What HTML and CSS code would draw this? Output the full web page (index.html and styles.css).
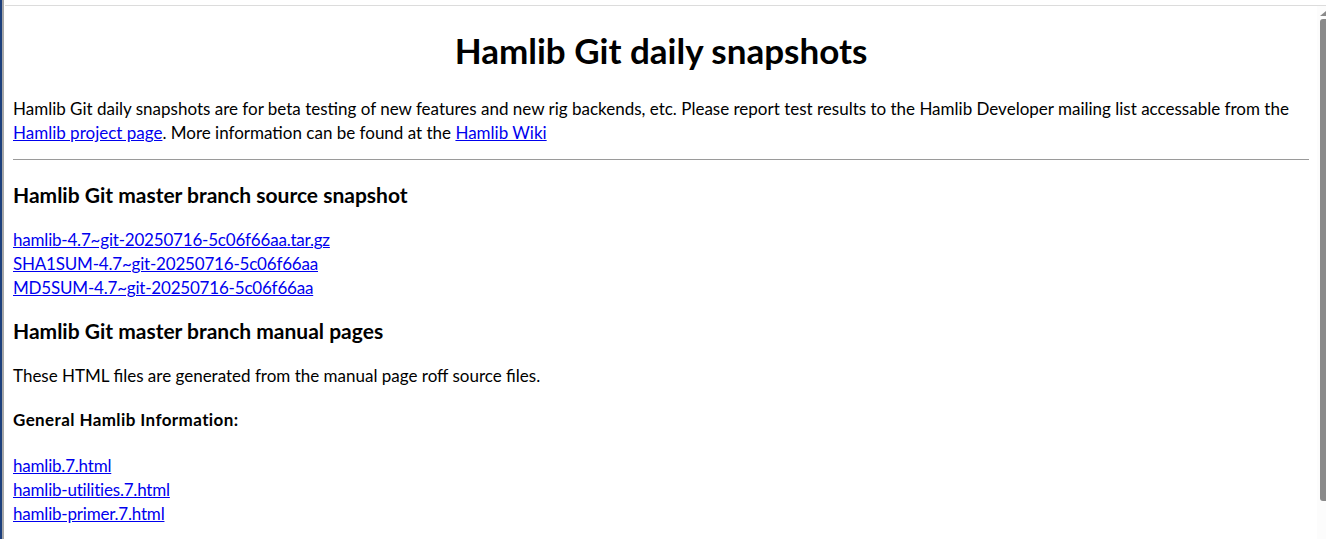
FILE: index.html
```html
<!DOCTYPE html>
<html lang="en">
<head>
<meta charset="utf-8">
<title>Hamlib Git daily snapshots</title>
<link rel="stylesheet" href="styles.css">
</head>
<body>
<div class="window">
  <div class="frame-left"></div>
  <div class="viewport">
    <main class="page">
      <h1 class="title">Hamlib Git daily snapshots</h1>
      <p class="intro">Hamlib Git daily snapshots are for beta testing of new features and new rig backends, etc. Please report test results to the Hamlib Developer mailing list accessable from the <a href="#">Hamlib project page</a>. More information can be found at the <a href="#">Hamlib Wiki</a></p>
      <hr class="rule">
      <h3 class="section">Hamlib Git master branch source snapshot</h3>
      <p class="links">
        <a href="#">hamlib-4.7~git-20250716-5c06f66aa.tar.gz</a><br>
        <a href="#">SHA1SUM-4.7~git-20250716-5c06f66aa</a><br>
        <a href="#">MD5SUM-4.7~git-20250716-5c06f66aa</a>
      </p>
      <h3 class="section">Hamlib Git master branch manual pages</h3>
      <p>These HTML files are generated from the manual page roff source files.</p>
      <p class="label">General Hamlib Information:</p>
      <p class="links">
        <a href="#">hamlib.7.html</a><br>
        <a href="#">hamlib-utilities.7.html</a><br>
        <a href="#">hamlib-primer.7.html</a>
      </p>
    </main>
    <div class="scrollbar"><div class="arrow"></div><div class="thumb"></div></div>
  </div>
</div>
</body>
</html>
```

FILE: styles.css
```css
html, body {
  margin: 0;
  padding: 0;
  height: 100%;
  overflow: hidden;
  background: #fff;
}
.window {
  display: flex;
  height: 100%;
}
.frame-left {
  width: 2px;
  flex: none;
  background: #1c3f7c;
  border-right: 2px solid #a7a7a7;
  margin-right: 1px;
}
.viewport {
  flex: 1;
  display: flex;
  margin-top: 5px;
  border-top: 1px solid #dcdcdc;
  min-width: 0;
}
.page {
  flex: 1;
  min-width: 0;
  padding: 0 8px;
  font-family: Lato, "Liberation Sans", sans-serif;
  font-size: 17px;
  line-height: 24px;
  color: #000;
}
.title {
  text-align: center;
  font-size: 35px;
  line-height: 40px;
  font-weight: 700;
  margin: 24px 0 27px;
}
p {
  margin: 20px 0;
}
.intro {
  margin-top: 0;
  margin-bottom: 14px;
}
a {
  color: #0000ee;
}
.rule {
  border: 0;
  border-top: 1px solid #9a9a9a;
  margin: 0 0 22px;
}
.section {
  font-size: 21px;
  font-weight: 700;
  line-height: 26px;
  margin: 18px 0 15px;
}
.links {
  margin-bottom: 18px;
  letter-spacing: -0.2px;
}
.label {
  font-weight: 700;
  letter-spacing: 0.4px;
  margin-bottom: 22px;
}
.scrollbar {
  width: 9px;
  flex: none;
  display: flex;
  flex-direction: column;
  align-items: flex-end;
  background: #fcfcfc;
}
.arrow {
  width: 0;
  height: 0;
  margin-top: 5px;
  border-left: 6px solid transparent;
  border-bottom: 5px solid #8a8a8a;
}
.thumb {
  width: 6px;
  height: 482px;
  margin-top: 3px;
  background: #8a8a8a;
  border-radius: 3px 0 0 3px;
}
```
